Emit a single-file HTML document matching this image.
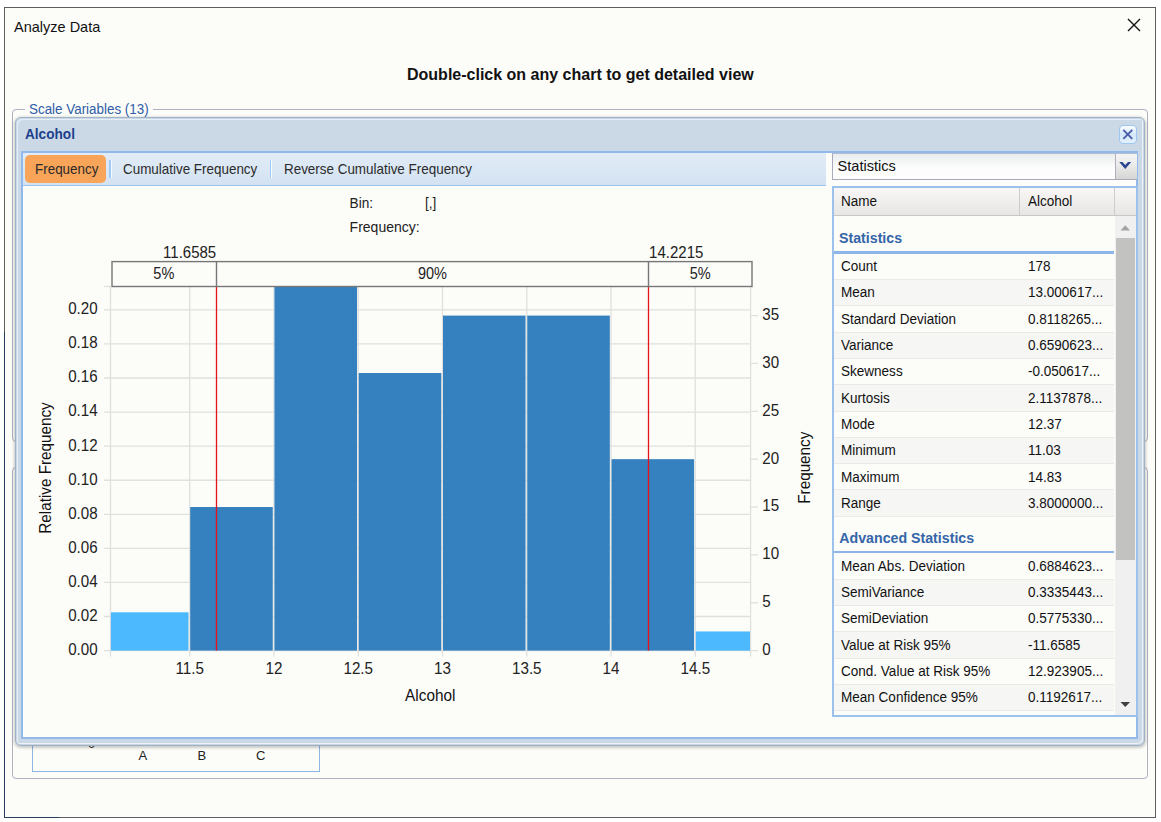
<!DOCTYPE html>
<html><head><meta charset="utf-8">
<style>
*{margin:0;padding:0;box-sizing:border-box}
html,body{width:1161px;height:822px;overflow:hidden;background:#ffffff;font-family:"Liberation Sans",sans-serif;color:#1a1a1a}
.a{position:absolute}
.t{position:absolute;white-space:pre;line-height:1}
</style></head><body>
<div class="a" style="left:4px;top:7px;width:1152px;height:811px;border:1px solid #5e5e5e;background:#fcfcf9"></div>
<div class="a" style="left:4px;top:332px;width:1px;height:486px;background:#2a3f5e"></div>
<div class="a" style="left:4px;top:817px;width:55px;height:1px;background:#2a3f5e"></div>
<div class="t" style="left:14px;top:18.50px;font-size:15px;color:#111;font-weight:normal;transform:scaleX(0.967);transform-origin:0 0;">Analyze Data</div>
<svg class="a" style="left:1126px;top:17px" width="16" height="16"><path d="M2 2L14 14M14 2L2 14" stroke="#111" stroke-width="1.4"/></svg>
<div class="t" style="left:407px;top:67.36px;font-size:16px;color:#111;font-weight:bold;">Double-click on any chart to get detailed view</div>
<div class="a" style="left:12px;top:108.5px;width:1136px;height:333px;border:1.5px solid #b0b0c2;border-radius:4px"></div>
<div class="a" style="left:25px;top:100px;width:128px;height:18px;background:#fcfcf9"></div>
<div class="t" style="left:29.3px;top:101.75px;font-size:14px;color:#2f5da8;font-weight:normal;transform:scaleX(0.957);transform-origin:0 0;">Scale Variables (13)</div>
<div class="a" style="left:12px;top:467px;width:1136px;height:312px;border:1.5px solid #b0b0c2;border-radius:4px"></div>
<div class="a" style="left:32px;top:700px;width:288px;height:72px;border:1px solid #8fb5e3;border-top:none"></div>
<div class="t" style="left:138.5px;top:748.50px;font-size:13px;color:#222;font-weight:normal;">A</div>
<div class="t" style="left:197.5px;top:748.50px;font-size:13px;color:#222;font-weight:normal;">B</div>
<div class="t" style="left:256px;top:748.50px;font-size:13px;color:#222;font-weight:normal;">C</div>
<div class="t" style="left:88px;top:736.50px;font-size:13px;color:#222;font-weight:normal;">0</div>
<div class="a" style="left:15px;top:117px;width:1130px;height:628.5px;border:1.5px solid #a0b3c6;border-radius:6px;background:#cbd9e6;box-shadow:inset 1px 1px 0 #c8d8e8, inset 2px 2px 0 #e6eef8, inset -1px -1px 0 #c8d6e4, inset -2px -2px 0 #edf2f8, 0 1px 3px 1px rgba(0,0,0,0.2)"></div>
<div class="t" style="left:24.9px;top:127.38px;font-size:14.2px;color:#1d3f8c;font-weight:bold;transform:scaleX(0.96);transform-origin:0 0;">Alcohol</div>
<div class="a" style="left:1118.5px;top:125px;width:18px;height:18.5px;border:1.5px solid #9fc5f0;border-radius:4px;background:linear-gradient(#fbfdff,#d3e8fb 50%,#e4f1fd)"></div>
<svg class="a" style="left:1118px;top:125px" width="19" height="19"><path d="M5.3 4.8L14.3 13.8M14.3 4.8L5.3 13.8" stroke="#4a5ca8" stroke-width="1.9"/></svg>
<div class="a" style="left:21px;top:151px;width:1117px;height:588px;border:2px solid #92b9ea;background:#fcfcf9"></div>
<div class="a" style="left:23px;top:153px;width:803px;height:33px;background:linear-gradient(#e2ecf7,#d3e2f2);border-bottom:1.5px solid #9dc2ec"></div>
<div class="a" style="left:25px;top:155px;width:81px;height:27.5px;background:#f8a459;border-radius:5px"></div>
<div class="t" style="left:34.6px;top:161.78px;font-size:14.2px;color:#2b2b2b;font-weight:normal;transform:scaleX(0.946);transform-origin:0 0;">Frequency</div>
<div class="a" style="left:109px;top:160px;width:2px;height:18px;background:#9fcaf6"></div>
<div class="a" style="left:111px;top:160px;width:1px;height:18px;background:#f6fbff"></div>
<div class="a" style="left:270px;top:160px;width:1px;height:18px;background:#9fcaf6"></div>
<div class="a" style="left:271px;top:160px;width:1px;height:18px;background:#f6fbff"></div>
<div class="t" style="left:123.4px;top:161.78px;font-size:14.2px;color:#2b2b2b;font-weight:normal;transform:scaleX(0.946);transform-origin:0 0;">Cumulative Frequency</div>
<div class="t" style="left:284.3px;top:161.78px;font-size:14.2px;color:#2b2b2b;font-weight:normal;transform:scaleX(0.946);transform-origin:0 0;">Reverse Cumulative Frequency</div>
<svg class="a" style="left:0;top:0" width="830" height="740" font-family="Liberation Sans"><line x1="104" y1="650.60" x2="750.6" y2="650.60" stroke="#e0e0de" stroke-width="1.3"/>
<text transform="translate(97.60,655.00) scale(0.93,1)" text-anchor="end" font-size="16.28" fill="#222">0.00</text>
<line x1="104" y1="616.52" x2="750.6" y2="616.52" stroke="#e0e0de" stroke-width="1.3"/>
<text transform="translate(97.60,620.92) scale(0.93,1)" text-anchor="end" font-size="16.28" fill="#222">0.02</text>
<line x1="104" y1="582.45" x2="750.6" y2="582.45" stroke="#e0e0de" stroke-width="1.3"/>
<text transform="translate(97.60,586.85) scale(0.93,1)" text-anchor="end" font-size="16.28" fill="#222">0.04</text>
<line x1="104" y1="548.38" x2="750.6" y2="548.38" stroke="#e0e0de" stroke-width="1.3"/>
<text transform="translate(97.60,552.77) scale(0.93,1)" text-anchor="end" font-size="16.28" fill="#222">0.06</text>
<line x1="104" y1="514.30" x2="750.6" y2="514.30" stroke="#e0e0de" stroke-width="1.3"/>
<text transform="translate(97.60,518.70) scale(0.93,1)" text-anchor="end" font-size="16.28" fill="#222">0.08</text>
<line x1="104" y1="480.23" x2="750.6" y2="480.23" stroke="#e0e0de" stroke-width="1.3"/>
<text transform="translate(97.60,484.62) scale(0.93,1)" text-anchor="end" font-size="16.28" fill="#222">0.10</text>
<line x1="104" y1="446.15" x2="750.6" y2="446.15" stroke="#e0e0de" stroke-width="1.3"/>
<text transform="translate(97.60,450.55) scale(0.93,1)" text-anchor="end" font-size="16.28" fill="#222">0.12</text>
<line x1="104" y1="412.07" x2="750.6" y2="412.07" stroke="#e0e0de" stroke-width="1.3"/>
<text transform="translate(97.60,416.47) scale(0.93,1)" text-anchor="end" font-size="16.28" fill="#222">0.14</text>
<line x1="104" y1="378.00" x2="750.6" y2="378.00" stroke="#e0e0de" stroke-width="1.3"/>
<text transform="translate(97.60,382.40) scale(0.93,1)" text-anchor="end" font-size="16.28" fill="#222">0.16</text>
<line x1="104" y1="343.93" x2="750.6" y2="343.93" stroke="#e0e0de" stroke-width="1.3"/>
<text transform="translate(97.60,348.32) scale(0.93,1)" text-anchor="end" font-size="16.28" fill="#222">0.18</text>
<line x1="104" y1="309.85" x2="750.6" y2="309.85" stroke="#e0e0de" stroke-width="1.3"/>
<text transform="translate(97.60,314.25) scale(0.93,1)" text-anchor="end" font-size="16.28" fill="#222">0.20</text>
<line x1="104" y1="286.5" x2="110.49089999999988" y2="286.5" stroke="#e0e0de" stroke-width="1.3"/>
<line x1="189.70" y1="286.5" x2="189.70" y2="656.6" stroke="#e0e0de" stroke-width="1.3"/>
<text transform="translate(189.70,673.90) scale(0.935,1)" text-anchor="middle" font-size="16.28" fill="#222">11.5</text>
<line x1="273.96" y1="286.5" x2="273.96" y2="656.6" stroke="#e0e0de" stroke-width="1.3"/>
<text transform="translate(273.96,673.90) scale(0.935,1)" text-anchor="middle" font-size="16.28" fill="#222">12</text>
<line x1="358.23" y1="286.5" x2="358.23" y2="656.6" stroke="#e0e0de" stroke-width="1.3"/>
<text transform="translate(358.23,673.90) scale(0.935,1)" text-anchor="middle" font-size="16.28" fill="#222">12.5</text>
<line x1="442.50" y1="286.5" x2="442.50" y2="656.6" stroke="#e0e0de" stroke-width="1.3"/>
<text transform="translate(442.50,673.90) scale(0.935,1)" text-anchor="middle" font-size="16.28" fill="#222">13</text>
<line x1="526.76" y1="286.5" x2="526.76" y2="656.6" stroke="#e0e0de" stroke-width="1.3"/>
<text transform="translate(526.76,673.90) scale(0.935,1)" text-anchor="middle" font-size="16.28" fill="#222">13.5</text>
<line x1="611.02" y1="286.5" x2="611.02" y2="656.6" stroke="#e0e0de" stroke-width="1.3"/>
<text transform="translate(611.02,673.90) scale(0.935,1)" text-anchor="middle" font-size="16.28" fill="#222">14</text>
<line x1="695.29" y1="286.5" x2="695.29" y2="656.6" stroke="#e0e0de" stroke-width="1.3"/>
<text transform="translate(695.29,673.90) scale(0.935,1)" text-anchor="middle" font-size="16.28" fill="#222">14.5</text>
<line x1="110.49" y1="286.5" x2="110.49" y2="656.6" stroke="#e0e0de" stroke-width="1.3"/>
<line x1="750.60" y1="286.5" x2="750.60" y2="656.6" stroke="#e0e0de" stroke-width="1.3"/>
<line x1="750.6" y1="650.60" x2="758" y2="650.60" stroke="#e0e0de" stroke-width="1.3"/>
<text transform="translate(762.30,655.00) scale(0.93,1)" text-anchor="start" font-size="16.28" fill="#222">0</text>
<line x1="750.6" y1="602.74" x2="758" y2="602.74" stroke="#e0e0de" stroke-width="1.3"/>
<text transform="translate(762.30,607.14) scale(0.93,1)" text-anchor="start" font-size="16.28" fill="#222">5</text>
<line x1="750.6" y1="554.88" x2="758" y2="554.88" stroke="#e0e0de" stroke-width="1.3"/>
<text transform="translate(762.30,559.28) scale(0.93,1)" text-anchor="start" font-size="16.28" fill="#222">10</text>
<line x1="750.6" y1="507.03" x2="758" y2="507.03" stroke="#e0e0de" stroke-width="1.3"/>
<text transform="translate(762.30,511.43) scale(0.93,1)" text-anchor="start" font-size="16.28" fill="#222">15</text>
<line x1="750.6" y1="459.17" x2="758" y2="459.17" stroke="#e0e0de" stroke-width="1.3"/>
<text transform="translate(762.30,463.57) scale(0.93,1)" text-anchor="start" font-size="16.28" fill="#222">20</text>
<line x1="750.6" y1="411.31" x2="758" y2="411.31" stroke="#e0e0de" stroke-width="1.3"/>
<text transform="translate(762.30,415.71) scale(0.93,1)" text-anchor="start" font-size="16.28" fill="#222">25</text>
<line x1="750.6" y1="363.45" x2="758" y2="363.45" stroke="#e0e0de" stroke-width="1.3"/>
<text transform="translate(762.30,367.85) scale(0.93,1)" text-anchor="start" font-size="16.28" fill="#222">30</text>
<line x1="750.6" y1="315.59" x2="758" y2="315.59" stroke="#e0e0de" stroke-width="1.3"/>
<text transform="translate(762.30,319.99) scale(0.93,1)" text-anchor="start" font-size="16.28" fill="#222">35</text>
<rect x="110.89" y="612.31" width="77.61" height="38.29" fill="#4cb8fd"/>
<rect x="190.20" y="507.03" width="82.56" height="143.57" fill="#3580be"/>
<rect x="274.46" y="286.88" width="82.57" height="363.72" fill="#3580be"/>
<rect x="358.73" y="373.02" width="82.56" height="277.58" fill="#3580be"/>
<rect x="443.00" y="315.59" width="82.56" height="335.01" fill="#3580be"/>
<rect x="527.26" y="315.59" width="82.56" height="335.01" fill="#3580be"/>
<rect x="611.52" y="459.17" width="82.56" height="191.43" fill="#3580be"/>
<rect x="695.79" y="631.46" width="54.21" height="19.14" fill="#4cb8fd"/>
<line x1="216.5" y1="286.5" x2="216.5" y2="650.6" stroke="#e8121a" stroke-width="1.3"/>
<line x1="648.5" y1="286.5" x2="648.5" y2="650.6" stroke="#e8121a" stroke-width="1.3"/>
<rect x="112" y="261.6" width="640" height="24.9" fill="none" stroke="#777" stroke-width="1.4"/>
<line x1="216.5" y1="261.6" x2="216.5" y2="286.5" stroke="#777" stroke-width="1.4"/>
<line x1="648.5" y1="261.6" x2="648.5" y2="286.5" stroke="#777" stroke-width="1.4"/>
<text transform="translate(163.80,279.30) scale(0.91,1)" text-anchor="middle" font-size="15.95" fill="#222">5%</text>
<text transform="translate(432.50,279.30) scale(0.91,1)" text-anchor="middle" font-size="15.95" fill="#222">90%</text>
<text transform="translate(700.20,279.30) scale(0.91,1)" text-anchor="middle" font-size="15.95" fill="#222">5%</text>
<text transform="translate(216.20,258.10) scale(0.91,1)" text-anchor="end" font-size="16.50" fill="#222">11.6585</text>
<text transform="translate(649.10,257.80) scale(0.91,1)" text-anchor="start" font-size="16.50" fill="#222">14.2215</text>
<text transform="translate(349.60,208.30) scale(0.91,1)" text-anchor="start" font-size="14.96" fill="#222">Bin:</text>
<text transform="translate(425.00,208.30) scale(0.91,1)" text-anchor="start" font-size="14.96" fill="#222">[,]</text>
<text transform="translate(349.60,232.20) scale(0.91,1)" text-anchor="start" font-size="15.40" fill="#222">Frequency:</text>
<text transform="translate(430.30,701.40) scale(0.95,1)" text-anchor="middle" font-size="16.17" fill="#111">Alcohol</text>
<text transform="translate(50.6,468) rotate(-90) scale(0.95,1)" text-anchor="middle" font-size="16.07" fill="#111">Relative Frequency</text>
<text transform="translate(809.6,467.7) rotate(-90) scale(0.95,1)" text-anchor="middle" font-size="16.07" fill="#111">Frequency</text></svg>
<div class="a" style="left:832px;top:152.5px;width:305px;height:27px;border:1px solid #aaa8bc;border-top-color:#b4bdd0;border-right:none;background:linear-gradient(#e9eded,#fcfdfc 55%,#fdfdfc)"></div>
<div class="t" style="left:837.5px;top:159.24px;font-size:14.6px;color:#111;font-weight:normal;">Statistics</div>
<div class="a" style="left:1115px;top:152.5px;width:22px;height:27px;border-left:1px solid #b0aec0;border-top:1px solid #b4bdd0;border-bottom:1px solid #aaa8bc;background:linear-gradient(#f4f4f4,#ececec 40%,#d6d6d4)"></div>
<svg class="a" style="left:1105px;top:150px" width="40" height="30"><path d="M14.2 11.9H17.4L20.2 14.9L23 11.9H26.2L20.2 18.9Z" fill="#2b4590"/></svg>
<div class="a" style="left:832px;top:186px;width:306px;height:531px;border:2px solid #9cc1ed;background:#fcfcf9"></div>
<div class="a" style="left:834px;top:188px;width:302px;height:28px;background:linear-gradient(#f8f7f6,#e8e6e4);border-bottom:1px solid #c9c7c5"></div>
<div class="a" style="left:1019px;top:188px;width:1px;height:27px;background:#cccccc"></div>
<div class="a" style="left:1113.5px;top:188px;width:1px;height:27px;background:#cccccc"></div>
<div class="t" style="left:841.2px;top:193.65px;font-size:14px;color:#111;font-weight:normal;transform:scaleX(0.966);transform-origin:0 0;">Name</div>
<div class="t" style="left:1028px;top:193.65px;font-size:14px;color:#111;font-weight:normal;transform:scaleX(0.966);transform-origin:0 0;">Alcohol</div>
<div class="t" style="left:839px;top:230.98px;font-size:14.2px;color:#3465a8;font-weight:bold;">Statistics</div>
<div class="a" style="left:834px;top:251.2px;width:280px;height:2.4px;background:#8db6e8"></div>
<div class="a" style="left:834px;top:253.60px;width:280px;height:26.32px;background:#fcfcf9;border-bottom:1px solid #ebeae7"></div>
<div class="t" style="left:841.2px;top:259.15px;font-size:14px;color:#111;font-weight:normal;transform:scaleX(0.966);transform-origin:0 0;">Count</div>
<div class="t" style="left:1028.2px;top:259.15px;font-size:14px;color:#111;font-weight:normal;transform:scaleX(0.966);transform-origin:0 0;">178</div>
<div class="a" style="left:834px;top:279.92px;width:280px;height:26.32px;background:#f6f6f4;border-bottom:1px solid #ebeae7"></div>
<div class="t" style="left:841.2px;top:285.47px;font-size:14px;color:#111;font-weight:normal;transform:scaleX(0.966);transform-origin:0 0;">Mean</div>
<div class="t" style="left:1028.2px;top:285.47px;font-size:14px;color:#111;font-weight:normal;transform:scaleX(0.966);transform-origin:0 0;">13.000617...</div>
<div class="a" style="left:834px;top:306.24px;width:280px;height:26.32px;background:#fcfcf9;border-bottom:1px solid #ebeae7"></div>
<div class="t" style="left:841.2px;top:311.79px;font-size:14px;color:#111;font-weight:normal;transform:scaleX(0.966);transform-origin:0 0;">Standard Deviation</div>
<div class="t" style="left:1028.2px;top:311.79px;font-size:14px;color:#111;font-weight:normal;transform:scaleX(0.966);transform-origin:0 0;">0.8118265...</div>
<div class="a" style="left:834px;top:332.56px;width:280px;height:26.32px;background:#f6f6f4;border-bottom:1px solid #ebeae7"></div>
<div class="t" style="left:841.2px;top:338.11px;font-size:14px;color:#111;font-weight:normal;transform:scaleX(0.966);transform-origin:0 0;">Variance</div>
<div class="t" style="left:1028.2px;top:338.11px;font-size:14px;color:#111;font-weight:normal;transform:scaleX(0.966);transform-origin:0 0;">0.6590623...</div>
<div class="a" style="left:834px;top:358.88px;width:280px;height:26.32px;background:#fcfcf9;border-bottom:1px solid #ebeae7"></div>
<div class="t" style="left:841.2px;top:364.43px;font-size:14px;color:#111;font-weight:normal;transform:scaleX(0.966);transform-origin:0 0;">Skewness</div>
<div class="t" style="left:1028.2px;top:364.43px;font-size:14px;color:#111;font-weight:normal;transform:scaleX(0.966);transform-origin:0 0;">-0.050617...</div>
<div class="a" style="left:834px;top:385.20px;width:280px;height:26.32px;background:#f6f6f4;border-bottom:1px solid #ebeae7"></div>
<div class="t" style="left:841.2px;top:390.75px;font-size:14px;color:#111;font-weight:normal;transform:scaleX(0.966);transform-origin:0 0;">Kurtosis</div>
<div class="t" style="left:1028.2px;top:390.75px;font-size:14px;color:#111;font-weight:normal;transform:scaleX(0.966);transform-origin:0 0;">2.1137878...</div>
<div class="a" style="left:834px;top:411.52px;width:280px;height:26.32px;background:#fcfcf9;border-bottom:1px solid #ebeae7"></div>
<div class="t" style="left:841.2px;top:417.07px;font-size:14px;color:#111;font-weight:normal;transform:scaleX(0.966);transform-origin:0 0;">Mode</div>
<div class="t" style="left:1028.2px;top:417.07px;font-size:14px;color:#111;font-weight:normal;transform:scaleX(0.966);transform-origin:0 0;">12.37</div>
<div class="a" style="left:834px;top:437.84px;width:280px;height:26.32px;background:#f6f6f4;border-bottom:1px solid #ebeae7"></div>
<div class="t" style="left:841.2px;top:443.39px;font-size:14px;color:#111;font-weight:normal;transform:scaleX(0.966);transform-origin:0 0;">Minimum</div>
<div class="t" style="left:1028.2px;top:443.39px;font-size:14px;color:#111;font-weight:normal;transform:scaleX(0.966);transform-origin:0 0;">11.03</div>
<div class="a" style="left:834px;top:464.16px;width:280px;height:26.32px;background:#fcfcf9;border-bottom:1px solid #ebeae7"></div>
<div class="t" style="left:841.2px;top:469.71px;font-size:14px;color:#111;font-weight:normal;transform:scaleX(0.966);transform-origin:0 0;">Maximum</div>
<div class="t" style="left:1028.2px;top:469.71px;font-size:14px;color:#111;font-weight:normal;transform:scaleX(0.966);transform-origin:0 0;">14.83</div>
<div class="a" style="left:834px;top:490.48px;width:280px;height:26.32px;background:#f6f6f4;border-bottom:1px solid #ebeae7"></div>
<div class="t" style="left:841.2px;top:496.03px;font-size:14px;color:#111;font-weight:normal;transform:scaleX(0.966);transform-origin:0 0;">Range</div>
<div class="t" style="left:1028.2px;top:496.03px;font-size:14px;color:#111;font-weight:normal;transform:scaleX(0.966);transform-origin:0 0;">3.8000000...</div>
<div class="t" style="left:839.3px;top:530.88px;font-size:14.2px;color:#3465a8;font-weight:bold;">Advanced Statistics</div>
<div class="a" style="left:834px;top:551.2px;width:280px;height:2.4px;background:#8db6e8"></div>
<div class="a" style="left:834px;top:553.40px;width:280px;height:26.32px;background:#fcfcf9;border-bottom:1px solid #ebeae7;"></div>
<div class="t" style="left:841.2px;top:558.85px;font-size:14px;color:#111;font-weight:normal;transform:scaleX(0.966);transform-origin:0 0;">Mean Abs. Deviation</div>
<div class="t" style="left:1028.2px;top:558.85px;font-size:14px;color:#111;font-weight:normal;transform:scaleX(0.966);transform-origin:0 0;">0.6884623...</div>
<div class="a" style="left:834px;top:579.72px;width:280px;height:26.32px;background:#f6f6f4;border-bottom:1px solid #ebeae7;"></div>
<div class="t" style="left:841.2px;top:585.17px;font-size:14px;color:#111;font-weight:normal;transform:scaleX(0.966);transform-origin:0 0;">SemiVariance</div>
<div class="t" style="left:1028.2px;top:585.17px;font-size:14px;color:#111;font-weight:normal;transform:scaleX(0.966);transform-origin:0 0;">0.3335443...</div>
<div class="a" style="left:834px;top:606.04px;width:280px;height:26.32px;background:#fcfcf9;border-bottom:1px solid #ebeae7;"></div>
<div class="t" style="left:841.2px;top:611.49px;font-size:14px;color:#111;font-weight:normal;transform:scaleX(0.966);transform-origin:0 0;">SemiDeviation</div>
<div class="t" style="left:1028.2px;top:611.49px;font-size:14px;color:#111;font-weight:normal;transform:scaleX(0.966);transform-origin:0 0;">0.5775330...</div>
<div class="a" style="left:834px;top:632.36px;width:280px;height:26.32px;background:#f6f6f4;border-bottom:1px solid #ebeae7;"></div>
<div class="t" style="left:841.2px;top:637.81px;font-size:14px;color:#111;font-weight:normal;transform:scaleX(0.966);transform-origin:0 0;">Value at Risk 95%</div>
<div class="t" style="left:1028.2px;top:637.81px;font-size:14px;color:#111;font-weight:normal;transform:scaleX(0.966);transform-origin:0 0;">-11.6585</div>
<div class="a" style="left:834px;top:658.68px;width:280px;height:26.32px;background:#fcfcf9;border-bottom:1px solid #ebeae7;"></div>
<div class="t" style="left:841.2px;top:664.13px;font-size:14px;color:#111;font-weight:normal;transform:scaleX(0.966);transform-origin:0 0;">Cond. Value at Risk 95%</div>
<div class="t" style="left:1028.2px;top:664.13px;font-size:14px;color:#111;font-weight:normal;transform:scaleX(0.966);transform-origin:0 0;">12.923905...</div>
<div class="a" style="left:834px;top:685.00px;width:280px;height:26.32px;background:#f6f6f4;border-bottom:1px solid #ebeae7;"></div>
<div class="t" style="left:841.2px;top:690.45px;font-size:14px;color:#111;font-weight:normal;transform:scaleX(0.966);transform-origin:0 0;">Mean Confidence 95%</div>
<div class="t" style="left:1028.2px;top:690.45px;font-size:14px;color:#111;font-weight:normal;transform:scaleX(0.966);transform-origin:0 0;">0.1192617...</div>
<div class="a" style="left:834px;top:711.32px;width:280px;height:4.18px;background:#fcfcf9;"></div>
<div class="a" style="left:1115px;top:216px;width:21px;height:499px;background:#f0f0f0"></div>
<div class="a" style="left:1116px;top:238.2px;width:19px;height:322px;background:#c2c2c0"></div>
<svg class="a" style="left:1115px;top:216px" width="21" height="500"><path d="M5.5 14.5L10.3 9.3L15.1 14.5Z" fill="#a3a3a3"/><path d="M5.5 486L10.3 491L15.1 486Z" fill="#404040"/></svg>
</body></html>
